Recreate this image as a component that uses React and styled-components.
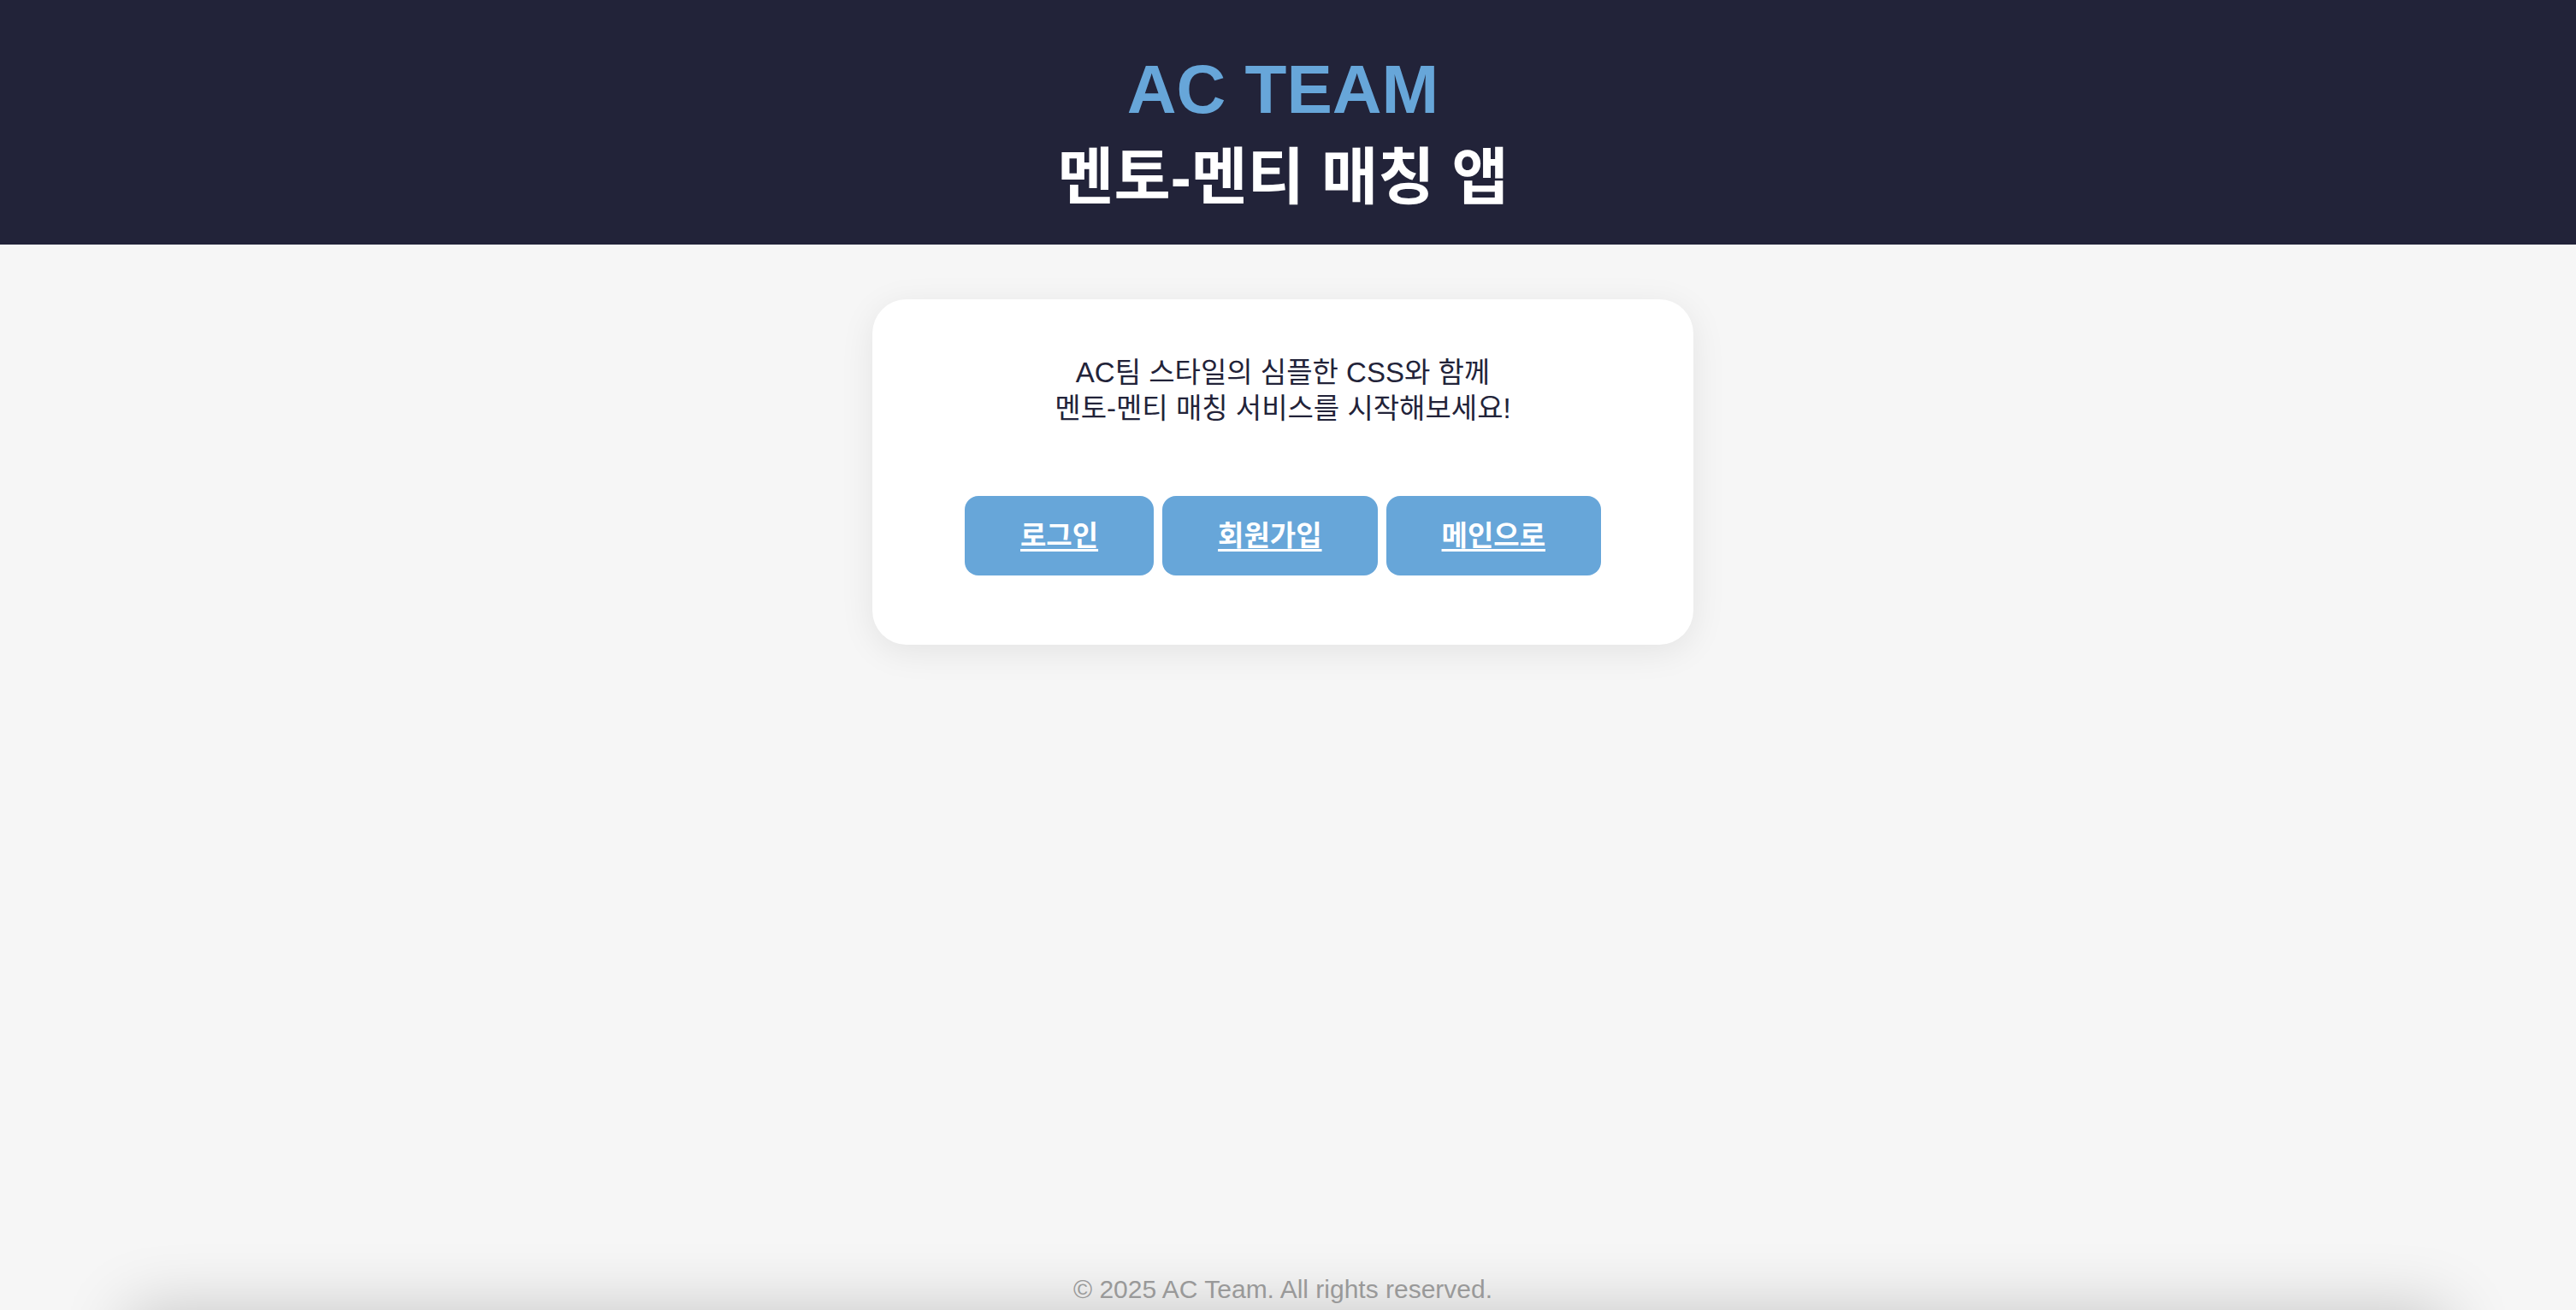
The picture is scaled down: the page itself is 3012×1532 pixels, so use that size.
import React from 'react';
import styled, {createGlobalStyle} from 'styled-components';

const GlobalStyle = createGlobalStyle`
  html, body {
    margin: 0;
    padding: 0;
    overflow: hidden;
    background: #f6f6f6;
    font-family: "Liberation Sans", "Noto Sans CJK KR", sans-serif;
  }
`;

// content sits a little left of the window centre in the shot
const OFFSET = '12px';

const Page = styled.div`
  display: flex;
  flex-direction: column;
  min-height: 100vh;
`;

const Header = styled.header`
  background: #222339;
  height: 286px;
  box-sizing: border-box;
  padding: 59px ${OFFSET} 0 0;
  text-align: center;
`;

const Logo = styled.h1`
  margin: 0;
  font-size: 80px;
  line-height: 92px;
  font-weight: 700;
  color: #67a6d9;
`;

const Subtitle = styled.h2`
  margin: 6px 0 0;
  font-size: 72px;
  line-height: 100px;
  font-weight: 700;
  color: #ffffff;
`;

const Main = styled.main`
  flex: 1;
  display: flex;
  justify-content: center;
  align-items: flex-start;
  padding: 64px ${OFFSET} 0 0;
`;

const Card = styled.section`
  width: 960px;
  box-sizing: border-box;
  padding: 65px 64px 81px;
  background: #ffffff;
  border-radius: 40px;
  box-shadow: 0 8px 40px rgba(0, 0, 0, 0.08);
  text-align: center;
`;

const Intro = styled.p`
  margin: 0 0 81px;
  font-size: 33px;
  line-height: 42px;
  color: #222339;
`;

const ButtonRow = styled.div`
  display: flex;
  justify-content: center;
  gap: 10px;
`;

const LinkButton = styled.a`
  display: inline-block;
  padding: 24px 65px;
  font-size: 33px;
  line-height: 45px;
  font-weight: 700;
  color: #ffffff;
  text-decoration: underline;
  text-underline-offset: 4px;
  background: #67a6d9;
  border-radius: 16px;
  cursor: pointer;
`;

const Footer = styled.footer`
  position: relative;
  z-index: 0;
  padding: 0 ${OFFSET} 7px 0;
  text-align: center;
  font-size: 30px;
  line-height: 35px;
  color: #999999;

  &::after {
    content: '';
    position: absolute;
    z-index: -1;
    left: 150px;
    right: 150px;
    top: 100%;
    height: 200px;
    box-shadow: 0 0 80px rgba(0, 0, 0, 0.2);
  }
`;

const links = [
    {label: '로그인', href: '#login'},
    {label: '회원가입', href: '#signup'},
    {label: '메인으로', href: '#main'},
];

const App = () => {
    return (
        <Page>
            <GlobalStyle />
            <Header>
                <Logo>AC TEAM</Logo>
                <Subtitle>멘토-멘티 매칭 앱</Subtitle>
            </Header>

            <Main>
                <Card>
                    <Intro>
                        AC팀 스타일의 심플한 CSS와 함께
                        <br />
                        멘토-멘티 매칭 서비스를 시작해보세요!
                    </Intro>
                    <ButtonRow>
                        {links.map((link) => (
                            <LinkButton key={link.href} href={link.href}>
                                {link.label}
                            </LinkButton>
                        ))}
                    </ButtonRow>
                </Card>
            </Main>

            <Footer>© 2025 AC Team. All rights reserved.</Footer>
        </Page>
    );
};

export default App;
